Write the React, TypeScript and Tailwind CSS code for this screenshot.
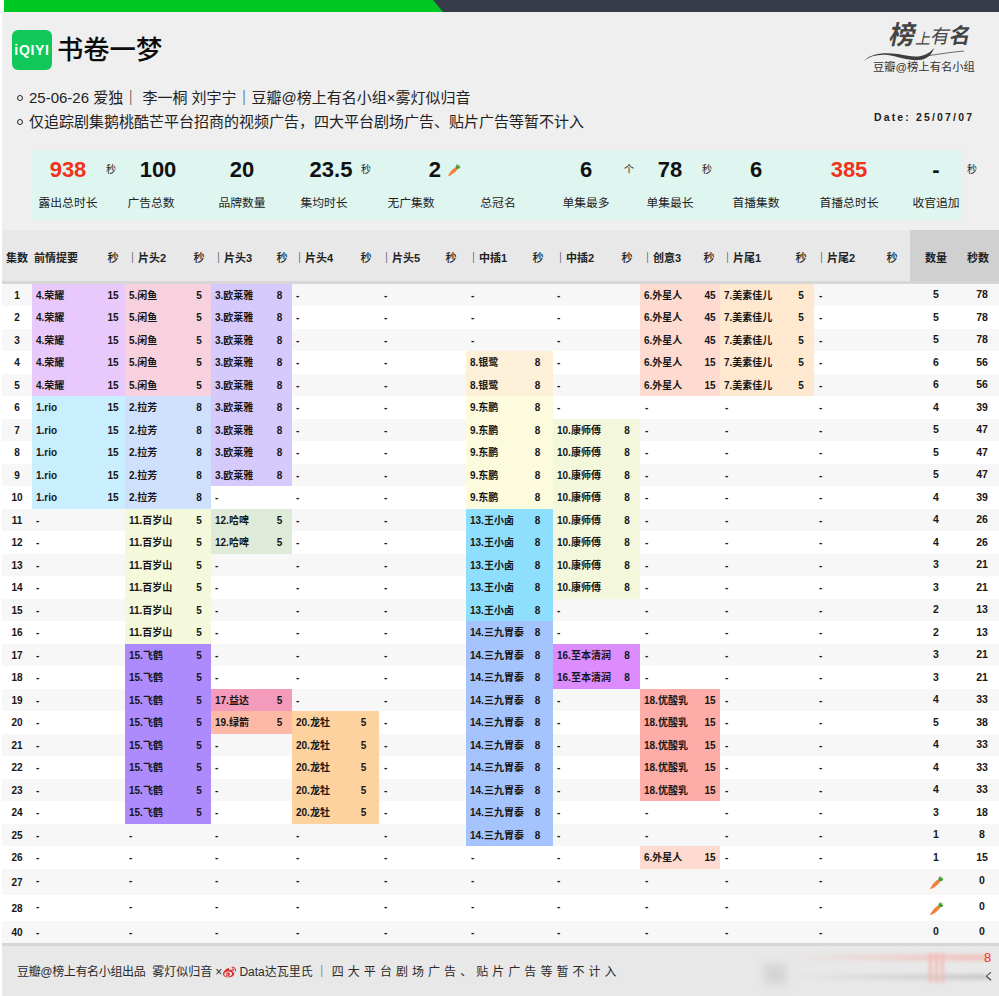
import React from "react";
import { FaWeibo } from "react-icons/fa";

type Cell = { n: string; s: number; c: string } | null;

const C = {
  rongyao: "bg-[#e9c9fc]", xianyu: "bg-[#f8d1df]", oulaiya: "bg-[#d6c9fc]", rio: "bg-[#c9eefd]",
  lafang: "bg-[#cfe0fc]", baisuishan: "bg-[#f5f9dc]", hapi: "bg-[#dfebd8]", dongpeng: "bg-[#fdfbde]",
  yinlu: "bg-[#fdf0d8]", wangxiaolu: "bg-[#8edffe]", sanjiu: "bg-[#a5c4fd]", kangshifu: "bg-[#f3f8dd]",
  zhiben: "bg-[#dc8cfd]", waixingren: "bg-[#fedbd1]", meisu: "bg-[#fee8d0]", feihe: "bg-[#ae8bfd]",
  yida: "bg-[#f49bbb]", lvjian: "bg-[#fdb9a6]", longmu: "bg-[#fdd29f]", yousuanru: "bg-[#fdaca7]",
};

const labels = [...Array.from({ length: 28 }, (_, i) => i + 1), 40];
const counts: (number | "carrot")[] = [5,5,5,6,6,4,5,5,5,4,4,4,3,3,2,2,3,3,4,5,4,4,4,3,1,1,"carrot","carrot",0];
const secs = [78,78,78,56,56,39,47,47,47,39,26,26,21,21,13,13,21,21,33,38,33,33,33,18,8,15,0,0,0];

const cellFor = (col: number, r: number): Cell => {
  const b = (n: string, s: number, c: string): Cell => ({ n, s, c });
  switch (col) {
    case 0:
      if (r <= 5) return b("4.荣耀", 15, C.rongyao);
      if (r <= 10) return b("1.rio", 15, C.rio);
      return null;
    case 1:
      if (r <= 5) return b("5.闲鱼", 5, C.xianyu);
      if (r <= 10) return b("2.拉芳", 8, C.lafang);
      if (r <= 16) return b("11.百岁山", 5, C.baisuishan);
      if (r <= 24) return b("15.飞鹤", 5, C.feihe);
      return null;
    case 2:
      if (r <= 9) return b("3.欧莱雅", 8, C.oulaiya);
      if (r === 11 || r === 12) return b("12.哈啤", 5, C.hapi);
      if (r === 19) return b("17.益达", 5, C.yida);
      if (r === 20) return b("19.绿箭", 5, C.lvjian);
      return null;
    case 3:
      if (r >= 20 && r <= 24) return b("20.龙牡", 5, C.longmu);
      return null;
    case 5:
      if (r === 4 || r === 5) return b("8.银鹭", 8, C.yinlu);
      if (r >= 6 && r <= 10) return b("9.东鹏", 8, C.dongpeng);
      if (r >= 11 && r <= 15) return b("13.王小卤", 8, C.wangxiaolu);
      if (r >= 16 && r <= 25) return b("14.三九胃泰", 8, C.sanjiu);
      return null;
    case 6:
      if (r >= 7 && r <= 14) return b("10.康师傅", 8, C.kangshifu);
      if (r === 17 || r === 18) return b("16.至本清润", 8, C.zhiben);
      return null;
    case 7:
      if (r <= 3) return b("6.外星人", 45, C.waixingren);
      if (r <= 5) return b("6.外星人", 15, C.waixingren);
      if (r >= 19 && r <= 23) return b("18.优酸乳", 15, C.yousuanru);
      if (r === 26) return b("6.外星人", 15, C.waixingren);
      return null;
    case 8:
      if (r <= 5) return b("7.美素佳儿", 5, C.meisu);
      return null;
    default:
      return null;
  }
};

const headers = ["前情提要", "｜片头2", "｜片头3", "｜片头4", "｜片头5", "｜中插1", "｜中插2", "｜创意3", "｜片尾1", "｜片尾2"];
const secW = ["w-[24px]", "w-[24px]", "w-[25px]", "w-[31px]", "w-[31px]", "w-[31px]", "w-[26px]", "w-[20px]", "w-[26px]", "w-[26px]"];
const headSecW = ["w-[24px]", "w-[24px]", "w-[20px]", "w-[26px]", "w-[30px]", "w-[30px]", "w-[26px]", "w-[22px]", "w-[26px]", "w-[36px]"];
const dashPl = ["pl-[4px]", "pl-[4px]", "pl-[4px]", "pl-[4px]", "pl-[5px]", "pl-[5px]", "pl-[4px]", "pl-[5px]", "pl-[5px]", "pl-[5px]"];
const grid = "grid grid-cols-[30px_93px_86px_81px_87px_87px_87px_87px_80px_94px_96px_52px_37px]";

function Carrot({ className }: { className: string }) {
  return (
    <svg viewBox="0 0 16 16" className={className}>
      <path d="M1 15.2 C2 12 6 7 9.2 5 C10.8 5.4 11.6 6.4 11.6 7.6 C9 11 4.5 14.2 1 15.2 Z" fill="#ee8237" />
      <path d="M9.8 5.2 C10 3.4 11 1.6 12 1 L12.4 3 L14.6 2.2 L14 4.2 L15.6 4.6 C14.6 6.2 13 7 11.4 7 Z" fill="#4f9a35" />
    </svg>
  );
}

function StatUnit({ t }: { t: string }) {
  return <div className="w-[14px] shrink-0 text-center text-[10px] font-normal text-[#222]">{t}</div>;
}

function Swoosh() {
  return (
    <svg viewBox="0 0 110 24" className="absolute left-0 top-[20px] h-[24px] w-[110px]">
      <path d="M0 21 C6 14 18 12 34 14 C46 16 52 18 60 15 C66 13 68 10 70 8 C68 14 64 19 56 20 C44 21 36 17 24 15 C14 14 6 16 0 21 Z" fill="#3f3f3f" />
      <path d="M62 16 C76 14 88 12 100 11" stroke="#4a4a4a" strokeWidth="0.8" fill="none" />
    </svg>
  );
}

export default function App() {
  return (
    <div className="h-[996px] w-[999px] overflow-hidden bg-white pl-[2px] font-['Liberation_Sans','Noto_Sans_CJK_SC',sans-serif] text-[#111]">
      <div className="ml-[2px] h-[12px] bg-[#383c4a]">
        <div className="h-full w-[439px] bg-[#00c822] [clip-path:polygon(0_0,429px_0,100%_100%,0_100%)]" />
      </div>

      <div className="flex h-[138px] justify-between bg-[#efefef]">
        <div className="pl-[10px] pt-[18px]">
          <div className="flex items-center gap-[5px]">
            <div className="flex h-[40px] w-[40px] items-center justify-center rounded-[6px] bg-[#10c95a] text-[14px] font-bold tracking-[0.7px] text-white">
              iQIYI
            </div>
            <div className="text-[26.3px] font-medium leading-[40px] text-[#0c0c0c]">书卷一梦</div>
          </div>
          <div className="mt-[16px] flex items-center pl-[5px] text-[15px] leading-[24px] text-[#222]">
            <span className="mr-[6px] h-[6px] w-[6px] rounded-full border border-[#222]" />
            <span>25-06-26 爱独｜ 李一桐 刘宇宁｜豆瓣@榜上有名小组×雾灯似归音</span>
          </div>
          <div className="flex items-center pl-[5px] text-[15px] leading-[24px] text-[#222]">
            <span className="mr-[6px] h-[6px] w-[6px] rounded-full border border-[#222]" />
            <span>仅追踪剧集鹅桃酷芒平台招商的视频广告，四大平台剧场广告、贴片广告等暂不计入</span>
          </div>
        </div>
        <div className="w-[135px]">
          <div className="relative mt-[8px] h-[40px]">
            <Swoosh />
            <div className="absolute left-[26px] top-[-1px] flex items-end text-[#444]">
              <span className="-skew-x-12 text-[26px] font-bold leading-[32px]">榜</span>
              <span className="-skew-x-12 text-[15px] leading-[24px]">上</span>
              <span className="-skew-x-12 text-[19px] leading-[28px]">有</span>
              <span className="-skew-x-12 text-[21px] font-bold leading-[30px]">名</span>
            </div>
          </div>
          <div className="pl-[9px] text-[11.3px] leading-[14px] text-[#333]">豆瓣@榜上有名小组</div>
          <div className="mt-[36px] pl-[10px] text-[10.5px] font-bold leading-[14px] tracking-[2.15px] text-[#222]">
            Date: 25/07/07
          </div>
        </div>
      </div>

      <div className="bg-[#efefef] pb-[10px] pl-[30px]">
        <div className="h-[70px] w-[930px] bg-[#dff5f0]">
          <div className="flex h-[40px] items-center whitespace-nowrap text-[22px] font-bold leading-[40px] text-[#111]">
            <div className="w-[72px] shrink-0 text-center text-[#f0321a]">938</div>
            <StatUnit t="秒" />
            <div className="w-[80px] shrink-0 text-center">100</div>
            <div className="w-[88px] shrink-0 text-center">20</div>
            <div className="w-[73px] shrink-0 pl-[17px] text-center">23.5</div>
            <StatUnit t="秒" />
            <div className="flex w-[88px] shrink-0 items-center justify-end">
              <span>2</span>
              <Carrot className="ml-[6px] h-[14px] w-[14px]" />
            </div>
            <div className="w-[89px] shrink-0" />
            <div className="w-[72px] shrink-0 text-center">6</div>
            <StatUnit t="个" />
            <div className="w-[64px] shrink-0 pl-[4px] text-center">78</div>
            <StatUnit t="秒" />
            <div className="w-[84px] shrink-0 text-center">6</div>
            <div className="w-[102px] shrink-0 text-center text-[#f0321a]">385</div>
            <div className="w-[65px] shrink-0 pl-[7px] text-center">-</div>
            <StatUnit t="秒" />
          </div>
          <div className="flex h-[26px] items-center whitespace-nowrap text-[11.8px] leading-[26px] text-[#222]">
            <div className="w-[72px] shrink-0 text-center">露出总时长</div>
            <div className="w-[94px] shrink-0 text-center">广告总数</div>
            <div className="w-[88px] shrink-0 text-center">品牌数量</div>
            <div className="w-[76px] shrink-0 text-center">集均时长</div>
            <div className="w-[98px] shrink-0 text-center">无广集数</div>
            <div className="w-[76px] shrink-0 text-center">总冠名</div>
            <div className="w-[100px] shrink-0 text-center">单集最多</div>
            <div className="w-[68px] shrink-0 text-center">单集最长</div>
            <div className="w-[104px] shrink-0 text-center">首播集数</div>
            <div className="w-[82px] shrink-0 text-center">首播总时长</div>
            <div className="w-[92px] shrink-0 text-center">收官追加</div>
          </div>
        </div>
      </div>

      <div className={`${grid} h-[51px] items-center bg-[#e8e8e8] text-[11px] font-bold text-[#222]`}>
        <div className="pl-[4px] pt-[5px]">集数</div>
        {headers.map((h, i) => (
          <div key={h} className={`flex items-center whitespace-nowrap pt-[5px] ${i === 0 ? "pl-[2px]" : "pl-[2px]"}`}>
            <span className="min-w-0 flex-1">{h}</span>
            <span className={`${headSecW[i]} shrink-0 text-center font-medium`}>秒</span>
          </div>
        ))}
        <div className="flex h-full items-center justify-center bg-[#d0d0d0] pt-[5px]">数量</div>
        <div className="flex h-full items-center justify-start bg-[#d0d0d0] pl-[5px] pt-[5px]">秒数</div>
      </div>
      <div className="h-[3px] bg-[#d6d6d6]" />

      {labels.map((label, idx) => {
        const tall = idx === 26 || idx === 27;
        const rowH = tall ? "h-[26px]" : idx % 2 === 0 ? "h-[22px]" : "h-[23px]";
        const stripe = idx % 2 === 0 ? "bg-[#f7f7f7]" : "bg-white";
        const count = counts[idx];
        return (
          <div key={label} className={`${grid} ${rowH} ${stripe} items-stretch text-[10px] text-[#161616]`}>
            <div className="flex items-center justify-center font-bold">{label}</div>
            {headers.map((_, col) => {
              const cell = cellFor(col, label);
              if (!cell) {
                return (
                  <div key={col} className={`flex items-center font-bold ${dashPl[col]} ${tall ? "pb-[3px]" : ""}`}>
                    -
                  </div>
                );
              }
              return (
                <div key={col} className={`flex items-center whitespace-nowrap pl-[4px] ${cell.c}`}>
                  <span className="min-w-0 flex-1 font-bold">{cell.n}</span>
                  <span className={`${secW[col]} shrink-0 text-center font-bold`}>{cell.s}</span>
                </div>
              );
            })}
            <div className="flex items-center justify-center text-[10.5px] font-bold">
              {count === "carrot" ? <Carrot className="h-[15px] w-[15px]" /> : count}
            </div>
            <div className={`flex items-center justify-center pl-[3px] text-[10.5px] font-bold ${tall ? "pb-[3px]" : ""}`}>{secs[idx]}</div>
          </div>
        );
      })}

      <div className="h-[3px] bg-[#d6d6d6]" />
      <div className="relative h-[50px] overflow-hidden bg-[#e8e8e8]">
        <div className="flex h-full items-center whitespace-nowrap pl-[15px] pt-[2px] text-[12px] text-[#2a2a2a]">
          <span className="tracking-[-0.35px]">豆瓣@榜上有名小组出品</span>
          <span className="ml-[7px]">雾灯似归音</span>
          <span className="ml-[3px]">×</span>
          <FaWeibo className="ml-[1px] h-[13px] w-[13px] text-[#d9302c]" />
          <span className="ml-[3px]">Data达瓦里氏</span>
          <span className="ml-[3px]">｜</span>
          <span className="ml-[4px] tracking-[4.05px]">四大平台剧场广告、贴片广告等暂不计入</span>
        </div>
        <div className="absolute left-[762px] top-[18px] h-[20px] w-[22px] bg-[#d4d4d4] blur-[4px]" />
        <div className="absolute left-[790px] top-[9px] h-[5px] w-[195px] bg-linear-to-r from-transparent to-[#f3b8b0] blur-[2px]" />
        <div className="absolute left-[790px] top-[29px] h-[4px] w-[195px] bg-linear-to-r from-transparent to-[#bdbdbd] blur-[2px]" />
        <div className="absolute left-[927px] top-[7px] h-[30px] w-[3px] bg-[#f3bdb4] blur-[1.5px]" />
        <div className="absolute left-[933px] top-[7px] h-[30px] w-[3px] bg-[#f3bdb4] blur-[1.5px]" />
        <div className="absolute left-[939px] top-[7px] h-[30px] w-[3px] bg-[#f3bdb4] blur-[1.5px]" />
        <div className="absolute left-[982px] top-[4px] text-[13px] leading-[16px] text-[#f0321a]">8</div>
        <div className="absolute left-[982px] top-[24px] text-[10px] leading-[14px] text-[#222]">く</div>
      </div>
    </div>
  );
}
